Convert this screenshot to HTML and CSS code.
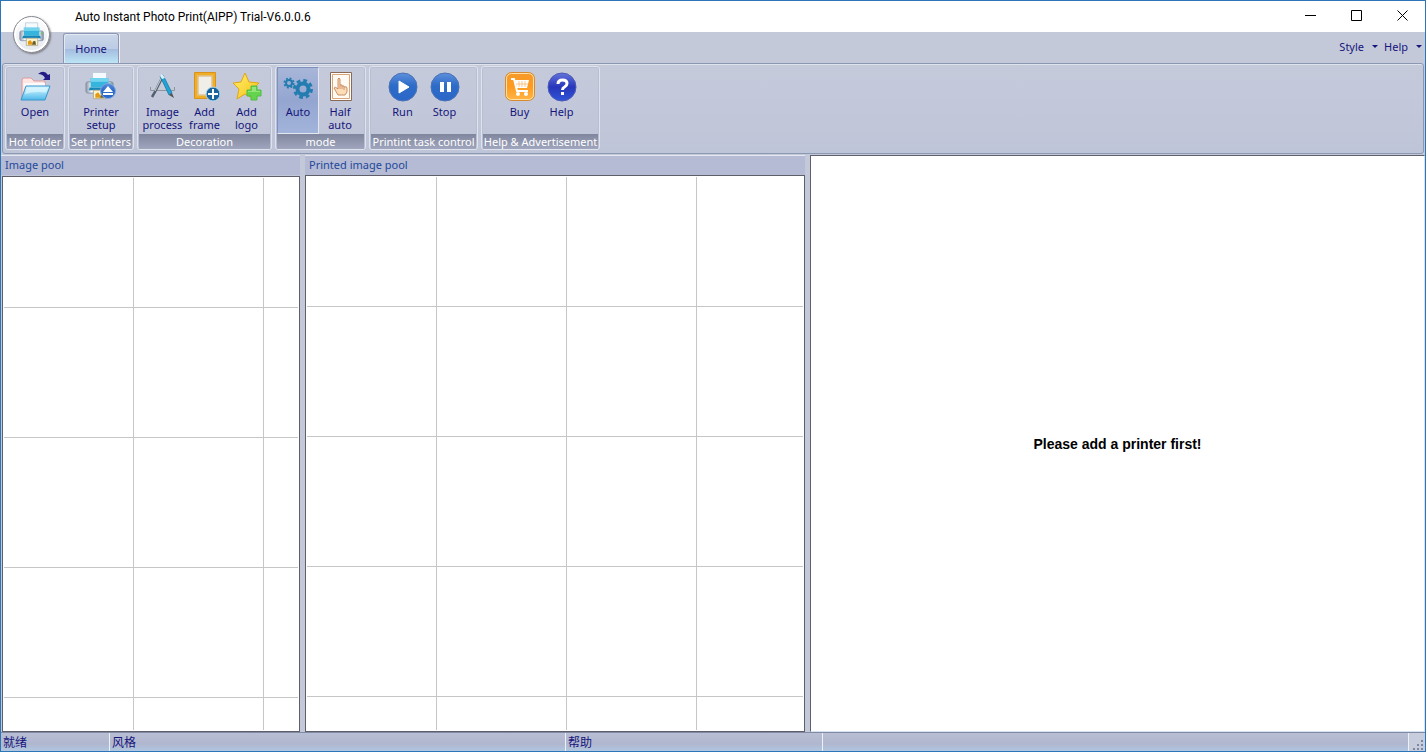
FILE: index.html
```html
<!DOCTYPE html>
<html lang="en">
<head>
    <meta charset="UTF-8">
    <meta name="viewport" content="width=device-width, initial-scale=1.0">
    <title>Auto Instant Photo Print(AIPP) Trial-V6.0.0.6</title>
    <link rel="stylesheet" href="styles.css">
</head>
<body>
    <!-- Shared gradients and the printer drawing -->
    <svg class="defs" width="0" height="0" aria-hidden="true">
        <defs>
            <linearGradient id="blue" x1="0" y1="0" x2="0" y2="1">
                <stop offset="0" stop-color="#5d8fdc"/>
                <stop offset="0.45" stop-color="#2e6cc8"/>
                <stop offset="1" stop-color="#2a66c8"/>
            </linearGradient>
            <linearGradient id="royal" x1="0" y1="0" x2="0" y2="1">
                <stop offset="0" stop-color="#6474da"/>
                <stop offset="0.5" stop-color="#2736ba"/>
                <stop offset="1" stop-color="#2f55d8"/>
            </linearGradient>
            <linearGradient id="orange" x1="0" y1="0" x2="0" y2="1">
                <stop offset="0" stop-color="#f59a2a"/>
                <stop offset="0.5" stop-color="#ff9a1f"/>
                <stop offset="1" stop-color="#ffb648"/>
            </linearGradient>
            <linearGradient id="folder" x1="0" y1="0" x2="0" y2="1">
                <stop offset="0" stop-color="#d2f4ff"/>
                <stop offset="0.5" stop-color="#98dcf7"/>
                <stop offset="1" stop-color="#4fb8ea"/>
            </linearGradient>
            <linearGradient id="gold" x1="0" y1="0" x2="1" y2="1">
                <stop offset="0" stop-color="#fff36e"/>
                <stop offset="1" stop-color="#f5bd13"/>
            </linearGradient>
            <linearGradient id="silver" x1="0" y1="0" x2="1" y2="0">
                <stop offset="0" stop-color="#8794a8"/>
                <stop offset="0.2" stop-color="#f4f7fa"/>
                <stop offset="0.8" stop-color="#f4f7fa"/>
                <stop offset="1" stop-color="#7c8aa0"/>
            </linearGradient>
            <symbol id="printer" viewBox="0 0 32 32">
                <path d="M8 1h15v10H8z" fill="#f4fafd" stroke="#bccbd8"/>
                <path d="M3 11q-2 0-2 2v8q0 2 2 2h25q2 0 2-2v-8q0-2-2-2z" fill="url(#silver)" stroke="#8595a8"/>
                <path d="M6 7h19v10H6z" fill="#35b5de"/>
                <path d="M6 7h19v4H6z" fill="#74d4ee"/>
                <path d="M5 17h21l1 3H4z" fill="#1685b8"/>
                <path d="M9 20h14v9H9z" fill="#fbf4cf" stroke="#b0aa8c"/>
                <path d="M11 28v-4l3-2 2 3v3z" fill="#e59a13"/>
                <path d="M16 28l1-4 3-1 1 5z" fill="#685b25"/>
                <path d="M27 14h2" stroke="#62c94a" stroke-width="2"/>
            </symbol>
        </defs>
    </svg>

    <div class="window">
        <header class="titlebar">
            <h1>Auto Instant Photo Print(AIPP) Trial-V6.0.0.6</h1>
            <div class="window-buttons">
                <button type="button" aria-label="Minimize">
                    <svg width="11" height="11"><path d="M0 5.5h11" stroke="#000"/></svg>
                </button>
                <button type="button" aria-label="Maximize">
                    <svg width="11" height="11"><path d="M.5.5h10v10H.5z" fill="none" stroke="#000"/></svg>
                </button>
                <button type="button" aria-label="Close">
                    <svg width="11" height="11"><path d="M.5.5l10 10M10.5.5l-10 10" stroke="#000"/></svg>
                </button>
            </div>
        </header>

        <button class="app-button" type="button" aria-label="Application menu">
            <svg width="26" height="26"><use href="#printer"/></svg>
        </button>

        <nav class="tabs">
            <button class="tab" type="button">Home</button>
            <div class="tab-menus">
                <button type="button">Style <span class="caret"></span></button>
                <button type="button">Help <span class="caret"></span></button>
            </div>
        </nav>

        <div class="ribbon">
            <section class="group group-folder">
                <div class="tools">
                    <button class="tool" type="button">
                        <svg width="32" height="32" viewBox="0 0 32 32">
                            <path d="M3 29V9q0-2 2-2h7l3 3h11v6" fill="#fde6e4" stroke="#dc9a9c"/>
                            <path d="M4 12h22v5H6z" fill="#fffafa"/>
                            <path d="M7 15h24l-5 14H2z" fill="url(#folder)" stroke="#3a96cc" stroke-linejoin="round"/>
                            <path d="M8 16.500h21l-2 5Q15 20 6 23z" fill="#e3faff" opacity=".65"/>
                            <path d="M19 3q6-5 10 1l2-1v6h-7l2-2q-2-4-7-4z" fill="#251c86"/>
                        </svg>
                        <span>Open</span>
                    </button>
                </div>
                <h2>Hot folder</h2>
            </section>

            <section class="group group-printer">
                <div class="tools">
                    <button class="tool" type="button">
                        <svg width="32" height="32" viewBox="0 0 32 32">
                            <use href="#printer" width="30" height="31"/>
                            <circle cx="23" cy="20" r="7.500" fill="url(#blue)" stroke="#7ea9e5"/>
                            <path d="M23 15l5 6H18zM18 22h10v2H18z" fill="#fff"/>
                        </svg>
                        <span>Printer setup</span>
                    </button>
                </div>
                <h2>Set printers</h2>
            </section>

            <section class="group group-decoration">
                <div class="tools">
                    <button class="tool" type="button">
                        <svg width="32" height="32" viewBox="0 0 32 32">
                            <path d="M3.500 16v3.500h24V16" fill="none" stroke="#8c95a1"/>
                            <path d="M4 18h23" stroke="#c3cad2" stroke-width="2"/>
                            <path d="M16 5L8 21l-3 5" fill="none" stroke="#536071" stroke-width="2.500"/>
                            <path d="M15 6L8 20" stroke="#cbd6df"/>
                            <path d="M13 5l3-1 9 18-3 2z" fill="#22a4d8" stroke="#087099" stroke-width=".7"/>
                            <path d="M22 24l3-2 2 5z" fill="#555"/>
                            <path d="M13 5l1-2 2 1 2 3-3 1z" fill="#d9eef8"/>
                        </svg>
                        <span>Image process</span>
                    </button>
                    <button class="tool" type="button">
                        <svg width="32" height="32" viewBox="0 0 32 32">
                            <path d="M7 3h18v23H7z" fill="#f0eee8" stroke="#f0ad28" stroke-width="3"/>
                            <path d="M5.500 1.500h21v26h-21z" fill="none" stroke="#d9921a"/>
                            <path d="M9 5h14v19H9z" fill="none" stroke="#d6ae66"/>
                            <circle cx="24" cy="23" r="7" fill="#17649f" stroke="#b7dceb"/>
                            <path d="M24 18v10M19 23h10" stroke="#fff" stroke-width="2"/>
                        </svg>
                        <span>Add frame</span>
                    </button>
                    <button class="tool" type="button">
                        <svg width="32" height="32" viewBox="0 0 32 32">
                            <path d="M14 2l4 9 10 1-7 7 2 9-9-5-8 5 2-10-6-6 8-1z" fill="url(#gold)" stroke="#e4a516" stroke-linejoin="round"/>
                            <path d="M20 15h6v4h4v6h-4v4h-6v-4h-4v-6h4z" fill="#64d34d" stroke="#4fbd45"/>
                            <path d="M21 16h4v4h4v1H17v-1h4z" fill="#93e579"/>
                        </svg>
                        <span>Add logo</span>
                    </button>
                </div>
                <h2>Decoration</h2>
            </section>

            <section class="group group-mode">
                <div class="tools">
                    <button class="tool active" type="button" aria-pressed="true">
                        <svg width="32" height="32" viewBox="0 0 32 32">
                            <g fill="none" stroke="#237db0">
                                <circle cx="7" cy="12" r="3" stroke-width="2"/>
                                <circle cx="7" cy="12" r="4.500" stroke-width="2" stroke-dasharray="1.900 1.634"/>
                                <circle cx="21" cy="18" r="5.500" stroke-width="4"/>
                                <circle cx="21" cy="18" r="8.500" stroke-width="3" stroke-dasharray="3.700 2.976"/>
                            </g>
                        </svg>
                        <span>Auto</span>
                    </button>
                    <button class="tool" type="button" aria-pressed="false">
                        <svg width="32" height="32" viewBox="0 0 32 32">
                            <path d="M6.500 1.500h21v28h-21z" fill="#fff" stroke="#8b6a55"/>
                            <path d="M8.500 3.500h17v24h-17z" fill="#fffaf4" stroke="#dba578"/>
                            <path d="M14 24l-4-7q1-2 4 1V8q1-2 2 0v6q2-1 2 1 2-1 2 1 3-1 3 1v4l-2 3z" fill="#ffdcb8" stroke="#b9784d" stroke-width=".8"/>
                            <path d="M16 14v4M18 15v3M20 16v3" stroke="#b9784d" stroke-width=".7"/>
                        </svg>
                        <span>Half auto</span>
                    </button>
                </div>
                <h2>mode</h2>
            </section>

            <section class="group group-task">
                <div class="tools">
                    <button class="tool" type="button">
                        <svg width="32" height="32" viewBox="0 0 32 32">
                            <circle cx="16" cy="16" r="14" fill="url(#blue)" stroke="#4a72b4"/>
                            <path d="M12 10l10 6-10 6z" fill="#fff" stroke="#fff" stroke-linejoin="round"/>
                        </svg>
                        <span>Run</span>
                    </button>
                    <button class="tool" type="button">
                        <svg width="32" height="32" viewBox="0 0 32 32">
                            <circle cx="16" cy="16" r="14" fill="url(#blue)" stroke="#4a72b4"/>
                            <path d="M11 11h4v10h-4zM18 11h4v10h-4z" fill="#fff"/>
                        </svg>
                        <span>Stop</span>
                    </button>
                </div>
                <h2>Printint task control</h2>
            </section>

            <section class="group group-help">
                <div class="tools">
                    <button class="tool" type="button">
                        <svg width="32" height="32" viewBox="0 0 32 32">
                            <rect x="1.500" y="1.500" width="29" height="28" rx="6" fill="url(#orange)" stroke="#d78b2d"/>
                            <rect x="2.500" y="2.500" width="27" height="26" rx="5" fill="none" stroke="#ffe0a8"/>
                            <path d="M7 8h3l3 12h11" fill="none" stroke="#fff" stroke-width="2"/>
                            <path d="M11 9h14l-2 8H13z" fill="#fff"/>
                            <path d="M15 10v6M18 10v6M21 10v6M12 13h12" stroke="#f8b05e" stroke-width=".7"/>
                            <circle cx="14" cy="23" r="2" fill="#fff"/>
                            <circle cx="22" cy="23" r="2" fill="#fff"/>
                        </svg>
                        <span>Buy</span>
                    </button>
                    <button class="tool" type="button">
                        <svg width="32" height="32" viewBox="0 0 32 32">
                            <circle cx="16" cy="16" r="14" fill="url(#royal)" stroke="#4b58b5"/>
                            <path d="M12 13q0-4 4.500-4t4.500 3.500q0 2-2.500 3.500-2 1-2 3" fill="none" stroke="#fff" stroke-width="3"/>
                            <path d="M15 21h3v3h-3z" fill="#fff"/>
                        </svg>
                        <span>Help</span>
                    </button>
                </div>
                <h2>Help &amp; Advertisement</h2>
            </section>
        </div>

        <main class="workspace">
            <section class="pool">
                <h2>Image pool</h2>
                <div class="thumbs thumbs-source"></div>
            </section>
            <section class="pool">
                <h2>Printed image pool</h2>
                <div class="thumbs"></div>
            </section>
            <section class="printers">
                <p>Please add a printer first!</p>
            </section>
        </main>

        <footer class="statusbar" lang="zh-CN">
            <span>就绪</span>
            <span>风格</span>
            <span>帮助</span>
            <span></span>
            <svg class="grip" width="16" height="18" aria-hidden="true">
                <path d="M12 7h2v2h-2zM8 11h2v2H8zM12 11h2v2h-2zM4 15h2v2H4zM8 15h2v2H8zM12 15h2v2h-2z" fill="#8087a3"/>
            </svg>
        </footer>
    </div>
</body>
</html>
```

FILE: styles.css
```css
* {
    margin: 0;
    padding: 0;
    box-sizing: border-box;
}

body {
    font-family: "Noto Sans", "Noto Sans CJK SC", sans-serif;
    font-size: 11px;
    line-height: 13px;
    color: #15157a;
    background: #c4c9da;
}

button {
    border: 0;
    background: none;
    color: inherit;
    font: inherit;
}

h1,
h2 {
    font-size: 11px;
    font-weight: normal;
}

.defs {
    position: absolute;
}

.window {
    position: relative;
    display: flex;
    flex-direction: column;
    height: 100vh;
    border: 1px solid #2b75b8;
}

/* Title bar */
.titlebar {
    display: flex;
    justify-content: space-between;
    height: 31px;
    padding-left: 74px;
    background: #fff;
    color: #000;
}

.titlebar h1 {
    font-family: Roboto, sans-serif;
    font-size: 12px;
    line-height: 33px;
}

.window-buttons {
    display: flex;
}

.window-buttons button {
    display: flex;
    align-items: center;
    justify-content: center;
    width: 46px;
    height: 28px;
}

.app-button {
    position: absolute;
    top: 15px;
    left: 12px;
    display: flex;
    align-items: center;
    justify-content: center;
    width: 37px;
    height: 37px;
    border: 1px solid #85888f;
    border-radius: 50%;
    background: linear-gradient(#fff, #e6e9ef);
    box-shadow: inset 0 0 0 2px #fff, 1px 1px 2px #777;
}

/* Tabs */
.tabs {
    display: flex;
    justify-content: space-between;
    height: 31px;
    padding: 1px 3px 0 62px;
}

.tab {
    width: 56px;
    border: 1px solid #8d97b3;
    border-bottom: 0;
    border-radius: 3px 3px 0 0;
    background: linear-gradient(#cbd6e8, #bccce5 50%, #a4bbdf 52%, #bce5f5);
    box-shadow: inset 1px 1px 0 #e2e9f2, 1px 0 0 #eef1f8;
}

.tab-menus {
    display: flex;
    align-items: center;
    gap: 6px;
    padding-bottom: 3px;
}

.tab-menus button {
    display: flex;
    align-items: center;
    gap: 8px;
}

.caret {
    border: 3px solid transparent;
    border-top-color: #15157a;
    border-bottom: 0;
}

/* Ribbon */
.ribbon {
    display: flex;
    gap: 3px;
    height: 91px;
    margin: 0 1px;
    padding: 2px;
    border: 1px solid #8b98b2;
    border-radius: 3px;
    background: linear-gradient(#c5cadb, #bfc5d8);
    box-shadow: inset 0 1px 0 #dfe3ed;
}

.group {
    display: flex;
    flex-direction: column;
    height: 84px;
    border: 1px solid #dfe3ed;
    border-radius: 3px;
    box-shadow: inset 0 0 0 1px #b9bfd2;
}

.group-folder { width: 60px; }
.group-printer { width: 66px; }
.group-decoration { width: 135px; }
.group-mode { width: 91px; }
.group-task { width: 109px; }
.group-help { width: 119px; }

.tools {
    display: flex;
    flex: 1;
    justify-content: center;
}

.group-mode .tools {
    justify-content: flex-start;
    padding-left: 1px;
}

.tool {
    display: flex;
    flex-direction: column;
    align-items: center;
    width: 42px;
    padding-top: 4px;
}

.tool svg {
    flex: none;
    margin-bottom: 2px;
}

.tool.active {
    border: 1px solid #7f90bd;
    border-right-color: #e2e7f2;
    border-bottom-color: #e2e7f2;
    padding-top: 3px;
    background: linear-gradient(#a8b6d9, #94a5d0 50%, #a2b4da);
}

.group h2 {
    height: 15px;
    margin: 0 1px;
    background: linear-gradient(#7f869e, #a0a6bd);
    color: #fff;
    text-align: center;
    line-height: 15px;
    white-space: nowrap;
}

/* Workspace */
.workspace {
    display: grid;
    flex: 1;
    grid-template-columns: 299fr 500fr 615fr;
    gap: 5px;
    min-height: 0;
    padding-top: 1px;
}

.pool {
    display: flex;
    flex-direction: column;
    border-top: 1px solid #e4e7f0;
}

.pool h2 {
    height: 19px;
    padding-left: 4px;
    background: #b5bbd4;
    color: #23489a;
    line-height: 17px;
}

.thumbs {
    flex: 1;
    border: 1px solid #5e5f68;
    background-color: #fff;
    background-image:
        linear-gradient(#c6c6c6 1px, transparent 1px),
        linear-gradient(90deg, #c6c6c6 1px, transparent 1px);
    background-size: 130px 130px;
    box-shadow: inset 0 0 0 1px #fff;
}

.thumbs-source {
    margin: 1px 0 0 1px;
}

.printers {
    display: flex;
    align-items: center;
    justify-content: center;
    border: 1px solid #d4e2ef;
    border-top-color: #5e5f68;
    border-left-color: #5e5f68;
    background: #fff;
}

.printers p {
    color: #000;
    font: bold 14px/16px "Liberation Sans", sans-serif;
}

/* Status bar */
.statusbar {
    display: grid;
    grid-template-columns: 109fr 456fr 257fr 586fr 16px;
    height: 19px;
    border-top: 1px solid #8289a5;
    background: linear-gradient(#b8bed3, #b0b7cf 60%, #b0c6e0);
    font-family: "Noto Sans CJK SC", sans-serif;
    font-size: 12px;
    line-height: 18px;
}

.statusbar span {
    padding-left: 2px;
    border-right: 1px solid #edf0f6;
}

.grip {
    background: #c8cddd;
}
```
